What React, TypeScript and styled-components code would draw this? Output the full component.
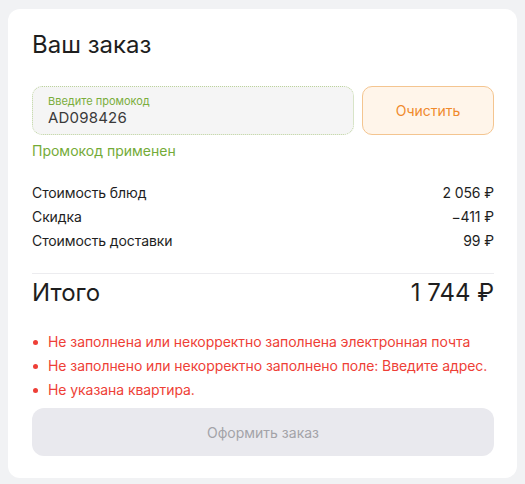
import styled, { createGlobalStyle } from "styled-components";

const GlobalStyle = createGlobalStyle`
  body {
    margin: 0;
    background: #f1f2f4;
    font-family: Inter, "Noto Sans", sans-serif;
    color: #1e1e1e;
  }
`;

const Page = styled.div`
  padding: 9px 8px 7px 8px;
`;

const Card = styled.div`
  background: #fff;
  border-radius: 12px;
  padding: 21px 23px 22px 24px;
  display: flex;
  flex-direction: column;
`;

const Title = styled.h2`
  margin: 0;
  font-size: 24px;
  line-height: 29px;
  font-weight: 400;
`;

const PromoRow = styled.div`
  display: flex;
  gap: 8px;
  margin-top: 27px;
`;

const PromoField = styled.label`
  flex: 1;
  height: 49px;
  box-sizing: border-box;
  background: #f5f5f5;
  border: 1px dotted #bcd39c;
  border-radius: 10px;
  padding: 5px 15px;
  display: flex;
  flex-direction: column;
  justify-content: center;
`;

const FieldLabel = styled.span`
  font-size: 11px;
  line-height: 14px;
  color: #7aad3c;
`;

const FieldValue = styled.span`
  font-size: 15px;
  line-height: 20px;
  color: #3a3a3a;
  letter-spacing: 0.2px;
`;

const ClearButton = styled.button`
  width: 132px;
  height: 49px;
  background: #fff5ea;
  border: 1px solid #f4c590;
  border-radius: 10px;
  color: #f08a2c;
  font-family: inherit;
  font-size: 14px;
`;

const Success = styled.div`
  margin-top: 6px;
  font-size: 14px;
  line-height: 20px;
  color: #74ab38;
`;

const Summary = styled.div`
  margin-top: 20px;
  display: flex;
  flex-direction: column;
`;

const Row = styled.div`
  display: flex;
  justify-content: space-between;
  font-size: 14px;
  line-height: 24px;
  letter-spacing: -0.1px;
  color: #1e1e1e;
`;

const Divider = styled.hr`
  margin: 20px 0 3px;
  border: none;
  border-top: 1px solid #ececef;
`;

const TotalRow = styled.div`
  display: flex;
  justify-content: space-between;
  font-size: 24px;
  line-height: 32px;
  color: #1e1e1e;
`;

const Errors = styled.ul`
  list-style: none;
  margin: 21px 0 0;
  padding: 0;
`;

const ErrorItem = styled.li`
  position: relative;
  padding-left: 16px;
  font-size: 14px;
  line-height: 24px;
  letter-spacing: -0.07px;
  color: #ee3f37;

  &::before {
    content: "";
    position: absolute;
    left: 1px;
    top: 10px;
    width: 5px;
    height: 5px;
    border-radius: 50%;
    background: #ee3f37;
  }
`;

const SubmitButton = styled.button`
  margin-top: 6px;
  height: 48px;
  border: none;
  border-radius: 12px;
  background: #e9e9ee;
  color: #a3a3a8;
  font-family: inherit;
  font-size: 14px;
`;

const rows = [
  ["Стоимость блюд", "2 056 ₽"],
  ["Скидка", "−411 ₽"],
  ["Стоимость доставки", "99 ₽"],
];

const errors = [
  "Не заполнена или некорректно заполнена электронная почта",
  "Не заполнено или некорректно заполнено поле: Введите адрес.",
  "Не указана квартира.",
];

export default function App() {
  return (
    <Page>
      <GlobalStyle />
      <Card>
        <Title>Ваш заказ</Title>
        <PromoRow>
          <PromoField>
            <FieldLabel>Введите промокод</FieldLabel>
            <FieldValue>AD098426</FieldValue>
          </PromoField>
          <ClearButton>Очистить</ClearButton>
        </PromoRow>
        <Success>Промокод применен</Success>
        <Summary>
          {rows.map(([label, value]) => (
            <Row key={label}>
              <span>{label}</span>
              <span>{value}</span>
            </Row>
          ))}
        </Summary>
        <Divider />
        <TotalRow>
          <span>Итого</span>
          <span>1 744 ₽</span>
        </TotalRow>
        <Errors>
          {errors.map((e) => (
            <ErrorItem key={e}>{e}</ErrorItem>
          ))}
        </Errors>
        <SubmitButton disabled>Оформить заказ</SubmitButton>
      </Card>
    </Page>
  );
}
